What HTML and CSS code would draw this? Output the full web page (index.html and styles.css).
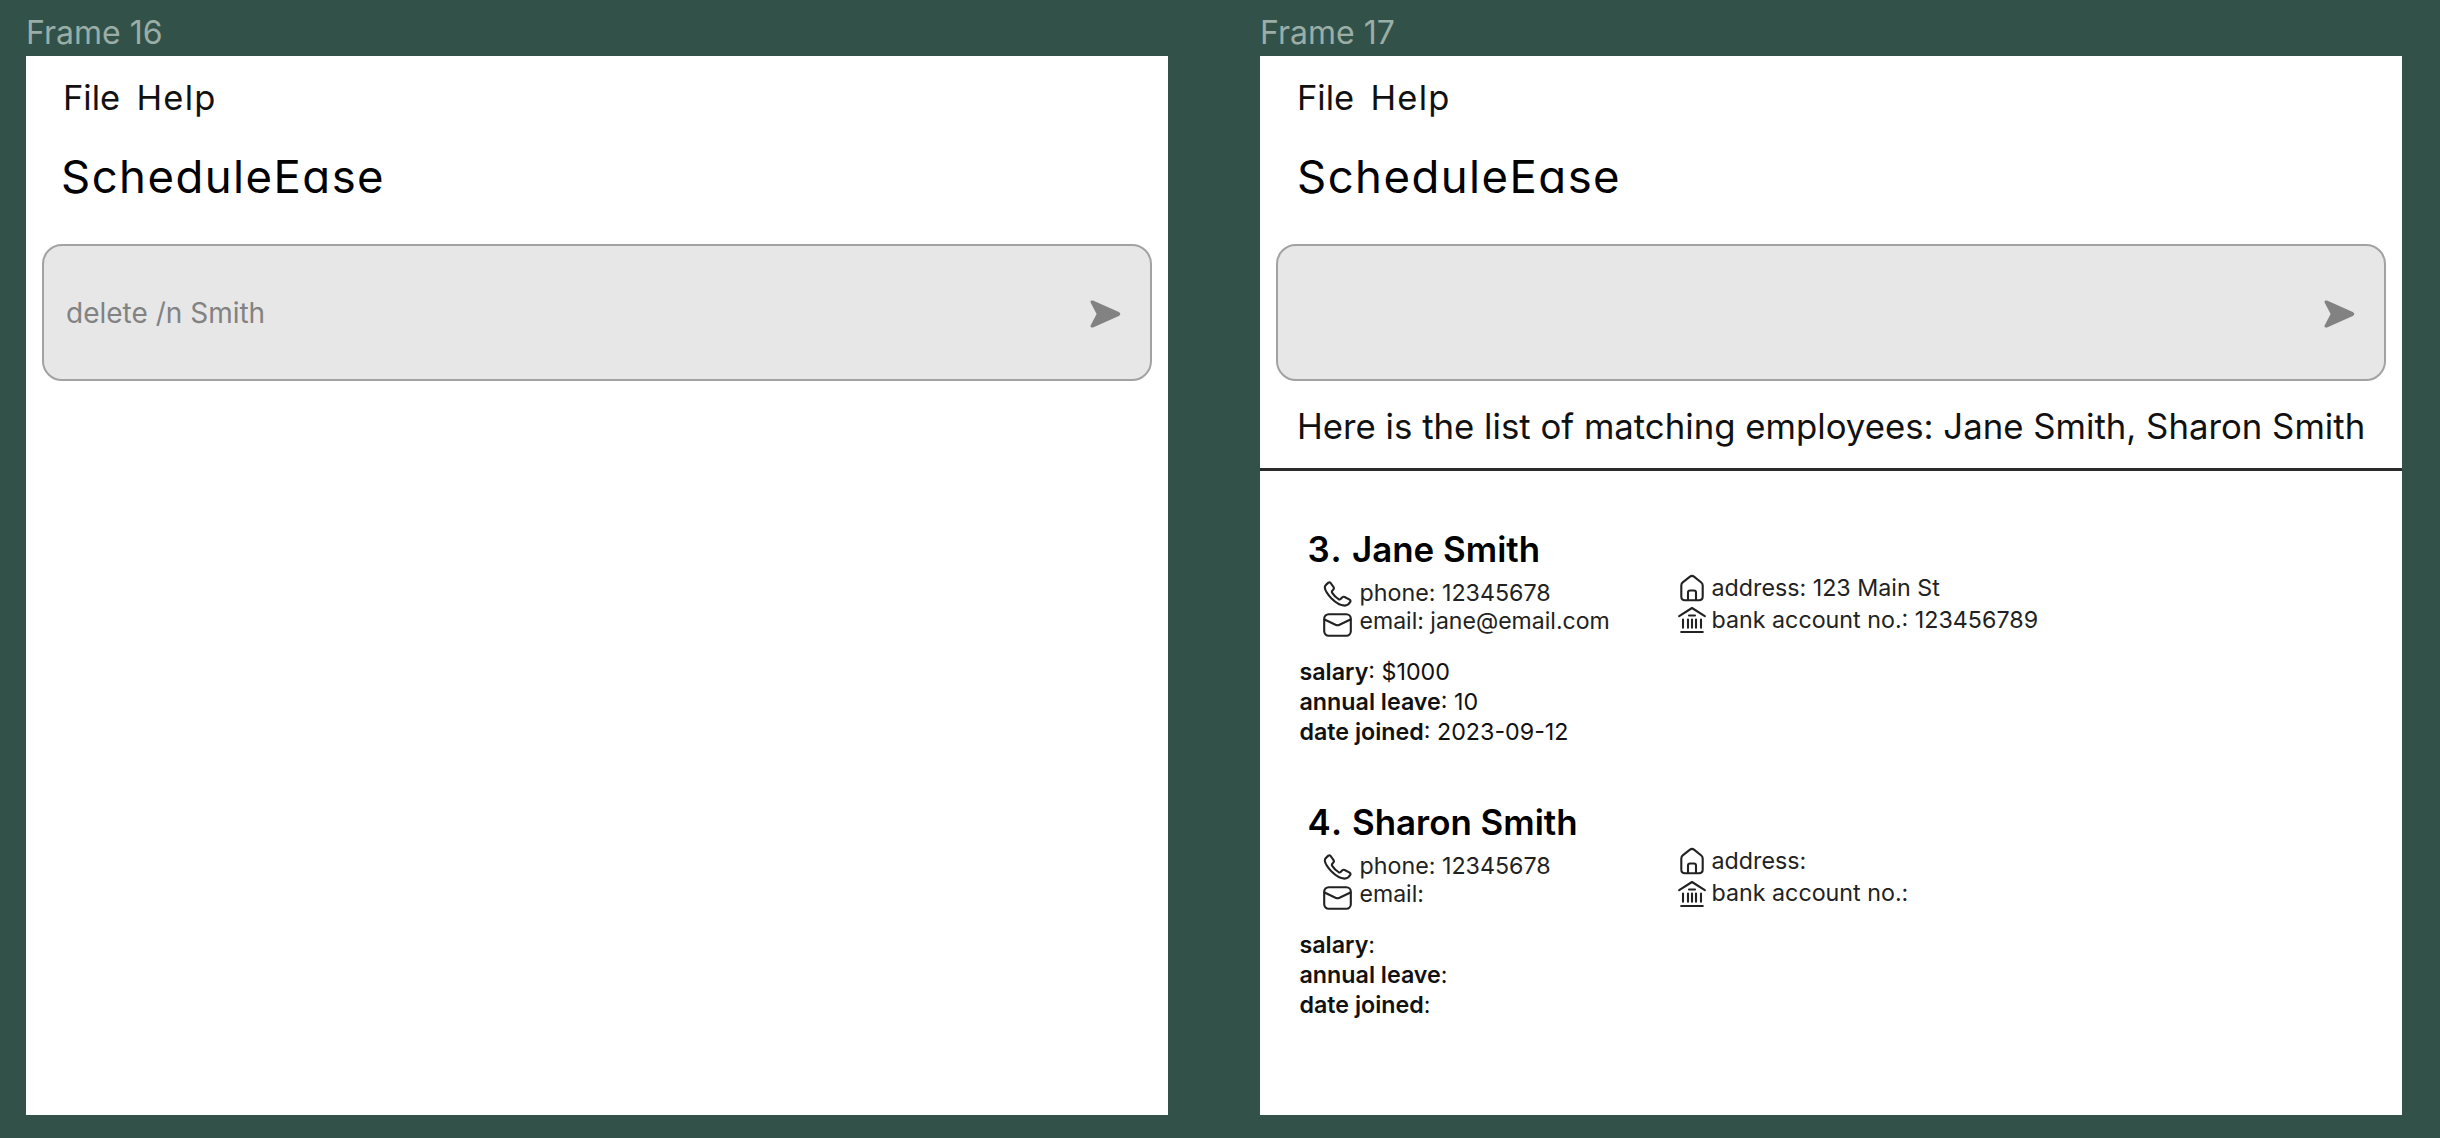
FILE: index.html
```
<!DOCTYPE html>
<html lang="en">
<head>
<meta charset="utf-8">
<title>ScheduleEase</title>
<link rel="stylesheet" href="styles.css">
</head>
<body>
<svg class="sprite" aria-hidden="true">
  <symbol id="send" viewBox="0 0 31 28"><path d="M3 .5 28.8 12Q31.8 14 28.8 16L3 27.5Q0 28 .6 25.6L6.6 14 .6 2.4Q0 0 3 .5Z" fill="#828282"/></symbol>
  <symbol id="phone" viewBox="0 0 29 26"><path d="M3.2 3.6 5.4 1.6Q6.600 .8 7.600 2L10.600 6.200Q11.300 7.400 10.400 8.400L9 10.200Q8.600 11 9.400 12.200 12 16.200 15.600 18.200 16.800 18.800 17.600 18L19.400 16.200Q20.400 15.400 21.600 16L26.600 18.600Q28 19.600 27.200 21 25.200 24.600 21.600 24.600 15.200 24.400 8.600 17.600 2.200 10.600 1.800 6.600 1.800 4.800 3.200 3.600Z"/></symbol>
  <symbol id="mail" viewBox="0 0 29 24"><rect x="1.200" y="1.200" width="26.600" height="21.600" rx="4.500"/><path d="M1.500 6.500 12.500 11.800Q14.500 12.700 16.500 11.800L27.500 6.500"/></symbol>
  <symbol id="home" viewBox="0 0 28 28"><path d="M3.300 11.500Q3.300 9.500 5 8.200L12 2.600Q14 1.200 16 2.600L23 8.200Q24.700 9.500 24.700 11.500V22.500Q24.700 26.200 21 26.200H7Q3.300 26.200 3.300 22.500ZM10 26V18.500Q10 16.500 12 16.500H16Q18 16.500 18 18.500V26"/></symbol>
  <symbol id="bank" viewBox="0 0 28 28"><path d="M1.200 10.200 14 2 26.800 10.200M11 9.500H17M5 13.500V21.800M10 13.500V21.800M14 13.500V21.800M18 13.500V21.800M23 13.500V21.800M3.200 26H24.800"/></symbol>
</svg>
<main class="canvas">
  <section class="frame">
    <h2 class="frame-label">Frame 16</h2>
    <div class="panel">
      <nav class="menu menu-first"><span class="menu-item">File</span><span class="menu-item">Help</span></nav>
      <h1 class="title title-first">ScheduleEase</h1>
      <div class="command"><span>delete /n Smith</span><svg class="send"><use href="#send"/></svg></div>
    </div>
  </section>
  <section class="frame">
    <h2 class="frame-label">Frame 17</h2>
    <div class="panel">
      <nav class="menu"><span class="menu-item">File</span><span class="menu-item">Help</span></nav>
      <h1 class="title">ScheduleEase</h1>
      <div class="command"><span></span><svg class="send"><use href="#send"/></svg></div>
      <p class="result">Here is the list of matching employees: Jane Smith, Sharon Smith</p>
      <div class="employees">
        <article class="employee">
          <h3 class="name"><span class="number">3.</span><span>Jane Smith</span></h3>
          <div class="details">
            <div class="contact">
              <div class="row"><svg class="icon phone"><use href="#phone"/></svg><span>phone: 12345678</span></div>
              <div class="row"><svg class="icon mail"><use href="#mail"/></svg><span class="email">email: jane@email.com</span></div>
            </div>
            <div class="place">
              <div class="row"><svg class="icon square"><use href="#home"/></svg><span>address: 123 Main St</span></div>
              <div class="row"><svg class="icon square"><use href="#bank"/></svg><span>bank account no.: 123456789</span></div>
            </div>
          </div>
          <div class="facts">
            <div><b>salary</b>: $1000</div>
            <div><b>annual leave</b>: 10</div>
            <div><b>date joined</b>: 2023-09-12</div>
          </div>
        </article>
        <article class="employee">
          <h3 class="name"><span class="number">4.</span><span>Sharon Smith</span></h3>
          <div class="details">
            <div class="contact">
              <div class="row"><svg class="icon phone"><use href="#phone"/></svg><span>phone: 12345678</span></div>
              <div class="row"><svg class="icon mail"><use href="#mail"/></svg><span class="email">email:</span></div>
            </div>
            <div class="place">
              <div class="row"><svg class="icon square"><use href="#home"/></svg><span>address:</span></div>
              <div class="row"><svg class="icon square"><use href="#bank"/></svg><span>bank account no.:</span></div>
            </div>
          </div>
          <div class="facts">
            <div><b>salary</b>:</div>
            <div><b>annual leave</b>:</div>
            <div><b>date joined</b>:</div>
          </div>
        </article>
      </div>
    </div>
  </section>
</main>
</body>
</html>
```
FILE: styles.css
```
* { box-sizing: border-box; }
body { margin: 0; background: #325249; color: #111; font-family: Inter, sans-serif; }
h1, h2, h3, p { margin: 0; font-weight: 400; }
.sprite { display: none; }
.canvas { display: flex; gap: 92px; height: 1138px; padding-left: 26px; }
.frame { width: 1142px; }
.frame-label { padding-top: 9px; font-size: 32px; line-height: 47px; color: #9aada7; }
.panel { height: 1059px; padding-top: 20px; background: #fff; }
.menu { display: flex; height: 44px; padding-left: 37px; font-size: 34.5px; line-height: 44px; letter-spacing: 0; }
.menu-first { padding-left: 37px; }
.menu-item { width: 73.500px; }
.menu-item + .menu-item { letter-spacing: 1.2px; }
.title { margin-top: 27px; padding-left: 37px; font-size: 45.5px; line-height: 60px; letter-spacing: 1.45px; font-feature-settings: "cv11"; color: #000; }
.title-first { padding-left: 35px; }
.command { display: flex; align-items: center; justify-content: space-between; height: 137px; margin: 37px 16px 0; padding: 0 29.5px 0 22px; border: 2px solid #a2a2a2; border-radius: 20px; background: #e7e7e7; color: #828282; font-size: 28px; }
.send { width: 31px; height: 28px; margin-top: 2px; }
.result { height: 90px; padding: 20px 0 0 37px; border-bottom: 3px solid #2b2b2b; font-size: 34.750px; line-height: 50px; white-space: nowrap; }
.employees { padding-top: 56px; }
.employee { margin-bottom: 53.8px; font-size: 23.25px; }
.name { display: flex; padding-left: 47.5px; font-size: 34.9px; font-weight: 600; line-height: 44px; color: #000; }
.number { width: 44.5px; letter-spacing: 1.5px; }
.details { display: grid; grid-template-columns: 355px 1fr; height: 64.5px; padding-left: 63px; color: #222; }
.contact { padding-top: 7.5px; line-height: 28px; }
.contact .row { gap: 7.500px; }
.place { padding-top: .5px; line-height: 32.500px; }
.row { display: flex; align-items: center; gap: 5.5px; height: 1lh; }
.email { font-size: 23.05px; }
.icon { fill: none; stroke: #222; stroke-width: 2.1; stroke-linecap: round; stroke-linejoin: round; flex: none; }
.phone { width: 29px; height: 26px; margin-top: 3px; }
.mail { width: 29px; height: 24px; margin-top: 9px; }
.square { width: 28px; height: 28px; }
.facts { margin-top: 21px; padding-left: 39.500px; line-height: 30px; }
.facts b { font-weight: 600; }
```
